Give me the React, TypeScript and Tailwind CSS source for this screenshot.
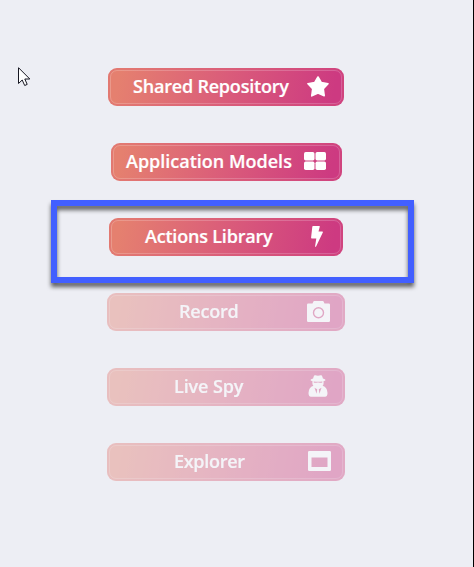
import type { ReactNode } from 'react';

type Item = {
  label: string;
  icon: ReactNode;
  box: string;
  text: string;
  iconPos: string;
  disabled?: boolean;
};

const Star = () => (
  <svg width="22" height="21" viewBox="0 0 22 21" fill="currentColor" stroke="currentColor" strokeWidth="1.6" strokeLinejoin="round">
    <path d="M11 1 14.200 6.500 21 7.700 16.300 12.800 17.200 19.800 11 17 4.800 19.800 5.700 12.800 1 7.700 7.800 6.500Z" />
  </svg>
);

const Tiles = () => (
  <svg width="22" height="18" viewBox="0 0 22 18" fill="currentColor">
    <rect width="10.5" height="8.400" rx="1.7" />
    <rect x="11.5" width="10.5" height="8.400" rx="1.7" />
    <rect y="9.600" width="10.5" height="8.400" rx="1.7" />
    <rect x="11.5" y="9.600" width="10.5" height="8.400" rx="1.7" />
  </svg>
);

const Bolt = () => (
  <svg width="12" height="21" viewBox="0 0 12 21" fill="currentColor">
    <path d="M2 0H8.300Q9 .1 8.700.9L7.500 5.400H11.300Q12.200 5.500 11.800 6.500L5.200 20.200Q4.700 21 4 20.700L5.300 12.500H.8Q0 12.400.1 11.500L1.300.8Q1.400.1 2 0Z" />
  </svg>
);

const Camera = () => (
  <svg width="23" height="21" viewBox="0 0 23 21" fill="currentColor">
    <path fillRule="evenodd" d="M1.300 2.500H5.500L6.300.7Q6.500 0 7.200 0h8.600q.7 0 .9.700L17.500 2.500h4.200Q23 2.500 23 3.800v15.900q0 1.300-1.300 1.300H1.300Q0 21 0 19.700V3.800Q0 2.500 1.300 2.500ZM11.500 6a5.700 5.700 0 1 0 0 11.400 5.700 5.700 0 0 0 0-11.400Zm0 1.400a4.300 4.300 0 1 1 0 8.600 4.300 4.300 0 0 1 0-8.600Z" />
  </svg>
);

const Spy = () => (
  <svg width="20" height="22" viewBox="0 0 20 22" fill="currentColor">
    <path fillRule="evenodd" d="M6.500.3Q7.500-.1 10 .7q2.500-.8 3.500-.4.900.8 1.400 3.300 2.600.6 2.600 1.300 0 .7-1.900 1.200v2.200q0 1.600-1 2.500Q19.500 12.500 19.500 18q0 3.700-2.500 3.700H3Q.5 21.700.5 18q0-5.500 4.900-7.200-1-.9-1-2.500V6.100Q2.500 5.600 2.500 4.900q0-.7 2.600-1.300Q5.600 1.100 6.500.3ZM5.700 6.600v.8q1.800.9 3.400 0h1.800q1.600.9 3.400 0V6.600Q10 7 5.700 6.600ZM6.500 12.800l2.100 6 .6-4.600ZM13.500 12.800l-2.100 6-.6-4.600Z" />
  </svg>
);

const Panel = () => (
  <svg width="23" height="20" viewBox="0 0 23 20" fill="currentColor">
    <path fillRule="evenodd" d="M1.300 0h20.400Q23 0 23 1.300v17.400q0 1.300-1.300 1.300H1.300Q0 20 0 18.700V1.300Q0 0 1.300 0ZM3.500 6.500v9.500h16V6.500Z" />
  </svg>
);

const items: Item[] = [
  { label: 'Shared Repository', icon: <Star />, box: 'ml-[108px] w-[236px] pl-[25px]', text: 'w-[157px] tracking-[-0.2px]', iconPos: 'mr-[15px]' },
  { label: 'Application Models', icon: <Tiles />, box: 'ml-[111px] w-[231px] pl-[15px]', text: 'w-[167px]', iconPos: 'mr-[16px]' },
  { label: 'Actions Library', icon: <Bolt />, box: 'ml-[109px] w-[234px] pl-[36px]', text: 'w-[129px] tracking-[-0.2px]', iconPos: 'mr-[20px]' },
  { label: 'Record', icon: <Camera />, box: 'ml-[107px] w-[238px] pl-[72px]', text: 'w-[60px] tracking-[-0.2px]', iconPos: 'mr-[15px]', disabled: true },
  { label: 'Live Spy', icon: <Spy />, box: 'ml-[107px] w-[238px] pl-[67px]', text: 'w-[71px] tracking-[-0.1px]', iconPos: 'mr-[17px]', disabled: true },
  { label: 'Explorer', icon: <Panel />, box: 'ml-[107px] w-[238px] pl-[67px]', text: 'w-[72px] tracking-[-0.3px]', iconPos: 'mr-[14px]', disabled: true },
];

function LauncherButton({ item }: { item: Item }) {
  return (
    <button
      type="button"
      disabled={item.disabled}
      className={`relative flex h-[38px] items-center justify-between rounded-[9px] bg-linear-[100deg,#e5806f_5%,#da5c7a_50%,#cd3a81_95%] pb-[2px] text-white ${item.box} ${item.disabled ? 'opacity-40' : ''}`}
    >
      <span className="absolute inset-0 rounded-[9px] border-2 border-[#dc6277]/25" />
      <span className="absolute inset-[2px] rounded-[7px] border border-white/20" />
      <span className={`relative whitespace-nowrap text-left text-[18px] leading-[24px] font-semibold [-webkit-text-stroke:0.2px_white] ${item.text}`}>
        {item.label}
      </span>
      <span className={`relative ${item.iconPos}`}>{item.icon}</span>
    </button>
  );
}

export default function App() {
  return (
    <main className="relative h-[567px] w-[474px] overflow-hidden border-r border-black bg-[#edeef4] font-['Open_Sans','Noto_Sans',sans-serif]">
      <nav className="flex flex-col gap-[37px] pt-[68px]">
        {items.map((item) => (
          <LauncherButton key={item.label} item={item} />
        ))}
      </nav>
      <div className="pointer-events-none absolute top-[200px] left-[51px] h-[83px] w-[363px] border-6 border-[#425fff] drop-shadow-[0_4px_2px_rgba(0,0,0,0.6)]" />
      <svg className="absolute top-[67px] left-[18px]" width="13" height="20" viewBox="0 0 13 20">
        <path d="M.5.700V16.500L4.200 13 6.700 18.500 9.200 17.400 6.800 12H11.800Z" fill="white" stroke="#171722" strokeWidth="1" />
      </svg>
    </main>
  );
}
